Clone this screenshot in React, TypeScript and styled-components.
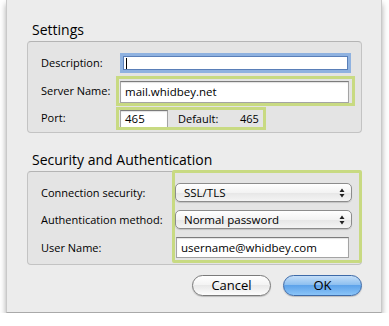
import styled, { createGlobalStyle } from "styled-components";

const GlobalStyle = createGlobalStyle`
  html, body {
    margin: 0;
    padding: 0;
    background: #ffffff;
  }
  body {
    font-family: "Open Sans", "DejaVu Sans", sans-serif;
    color: #000;
  }
`;

const green = "#c8da82";

const Dialog = styled.div`
  width: 376px;
  height: 313px;
  margin-left: 6px;
  box-sizing: border-box;
  background: #ececec;
  border-left: 1px solid #c9c9c9;
  border-right: 1px solid #c9c9c9;
  border-bottom: 1px solid #a9a9a9;
  box-shadow: 0 4px 6px rgba(0, 0, 0, 0.35);
  padding: 20px 19px 0 20px;
  display: flex;
  flex-direction: column;
`;

const SectionTitle = styled.h2`
  margin: 0 0 0 5px;
  font-size: 14px;
  font-weight: 400;
  line-height: 20px;
  height: 21px;
`;

const Group = styled.div`
  background: #e4e4e4;
  border: 1px solid #c3c3c3;
  border-top-color: #b4b4b4;
  border-radius: 4px;
`;

const SettingsGroup = styled(Group)`
  height: 92px;
  box-sizing: border-box;
  padding: 8px 10px 0 13px;
  margin-bottom: 17px;
  display: grid;
  grid-template-columns: 79px 1fr;
  grid-template-rows: 26px 26px 26px;
  row-gap: 1.5px;
  align-items: center;
`;

const Label = styled.span`
  font-size: 11px;
  line-height: 14px;
  white-space: nowrap;
`;

const TextField = styled.div<{ $width?: number }>`
  box-sizing: border-box;
  width: ${(p) => (p.$width ? `${p.$width}px` : "100%")};
  height: 22px;
  background: #fff;
  border: 1px solid #a4a4a4;
  border-top-color: #7c7c7c;
  box-shadow: inset 0 1px 1px rgba(0, 0, 0, 0.12);
  font-size: 11.5px;
  line-height: 20px;
  padding-left: 4px;
  white-space: nowrap;
  overflow: hidden;
`;

const FocusedField = styled(TextField)`
  width: 225px;
  height: 14px;
  margin-left: 3px;
  border-color: #5a7fb8;
  box-shadow: 0 0 0 3px #8fb2e0;
  line-height: 12px;
  padding-left: 2px;
`;

const Caret = styled.span`
  display: inline-block;
  width: 1px;
  height: 11px;
  background: #000;
  vertical-align: middle;
`;

const Highlight = styled.div`
  outline: 3px solid ${green};
`;

const ServerHighlight = styled(Highlight)`
  padding: 2px 3px 0 1px;
  margin-left: -1px;
  width: 229px;
`;

const PortHighlight = styled(Highlight)`
  margin-left: -1px;
  width: 143px;
  height: 17px;
  padding-left: 1px;
  display: flex;
  align-items: center;
`;

const PortField = styled(TextField)`
  height: 18px;
  line-height: 16px;
  margin-top: 1px;
`;

const DefaultLabel = styled.span`
  font-size: 11px;
  margin-left: 10px;
  width: 62px;
`;

const DefaultValue = styled.span`
  font-size: 11px;
`;

const SecurityGroup = styled(Group)`
  height: 94px;
  box-sizing: border-box;
  display: flex;
`;

const LabelColumn = styled.div`
  box-sizing: border-box;
  flex: 0 0 144px;
  padding: 11px 0 0 13px;
  display: flex;
  flex-direction: column;
  gap: 8px;
`;

const LabelRow = styled.div<{ $h: number }>`
  height: ${(p) => p.$h}px;
  display: flex;
  align-items: center;
`;

const ControlColumn = styled.div`
  flex: 1;
  margin: -2px -1px 1px 0;
  border: 3px solid ${green};
  border-radius: 2px;
  padding: 10px 7px 0 0;
  display: flex;
  flex-direction: column;
  gap: 8px;
`;

const Select = styled.div`
  box-sizing: border-box;
  height: 19px;
  border: 1px solid #8c8c8c;
  border-radius: 5px;
  background: linear-gradient(#ffffff, #f3f3f3 50%, #e6e6e6 51%, #f4f4f4);
  box-shadow: 0 1px 1px rgba(0, 0, 0, 0.15);
  display: flex;
  align-items: center;
  padding: 0 6px 0 8px;
  font-size: 11.5px;
`;

const SelectText = styled.span`
  flex: 1;
`;

const Arrows = styled.svg`
  width: 6px;
  height: 10px;
`;

const UserField = styled(TextField)`
  width: 173px;
  height: 21px;
  line-height: 19px;
  margin-left: 1px;
`;

const ButtonBar = styled.div`
  display: flex;
  justify-content: flex-end;
  gap: 12px;
  margin-top: 10px;
`;

const Button = styled.button<{ $primary?: boolean }>`
  width: 79px;
  height: 21px;
  border-radius: 11px;
  font-family: "Open Sans", "DejaVu Sans", sans-serif;
  font-size: 13px;
  line-height: 19px;
  padding: 0;
  color: #000;
  border: 1px solid ${(p) => (p.$primary ? "#3d6aa8" : "#7a7a7a")};
  background: ${(p) =>
    p.$primary
      ? "linear-gradient(#c4def8, #8fc0f0 45%, #5ea3ea 50%, #8ac4f8 100%)"
      : "linear-gradient(#ffffff, #f4f4f4 45%, #e8e8e8 50%, #fdfdfd 100%)"};
  box-shadow: 0 1px 1px rgba(0, 0, 0, 0.2);
`;

const SelectArrows = () => (
  <Arrows viewBox="0 0 6 10">
    <path d="M3 0.5 L5.5 4 L0.5 4 Z" fill="#222" />
    <path d="M3 9.5 L5.5 6 L0.5 6 Z" fill="#222" />
  </Arrows>
);

const App = () => {
  return (
    <>
      <GlobalStyle />
      <Dialog>
        <SectionTitle>Settings</SectionTitle>
        <SettingsGroup>
          <Label>Description:</Label>
          <FocusedField>
            <Caret />
          </FocusedField>
          <Label>Server Name:</Label>
          <ServerHighlight>
            <TextField>mail.whidbey.net</TextField>
          </ServerHighlight>
          <Label>Port:</Label>
          <PortHighlight>
            <PortField $width={48}>465</PortField>
            <DefaultLabel>Default:</DefaultLabel>
            <DefaultValue>465</DefaultValue>
          </PortHighlight>
        </SettingsGroup>

        <SectionTitle>Security and Authentication</SectionTitle>
        <SecurityGroup>
          <LabelColumn>
            <LabelRow $h={19}>
              <Label>Connection security:</Label>
            </LabelRow>
            <LabelRow $h={19}>
              <Label>Authentication method:</Label>
            </LabelRow>
            <LabelRow $h={21}>
              <Label>User Name:</Label>
            </LabelRow>
          </LabelColumn>
          <ControlColumn>
            <Select>
              <SelectText>SSL/TLS</SelectText>
              <SelectArrows />
            </Select>
            <Select>
              <SelectText>Normal password</SelectText>
              <SelectArrows />
            </Select>
            <UserField>username@whidbey.com</UserField>
          </ControlColumn>
        </SecurityGroup>

        <ButtonBar>
          <Button>Cancel</Button>
          <Button $primary>OK</Button>
        </ButtonBar>
      </Dialog>
    </>
  );
};

export default App;
